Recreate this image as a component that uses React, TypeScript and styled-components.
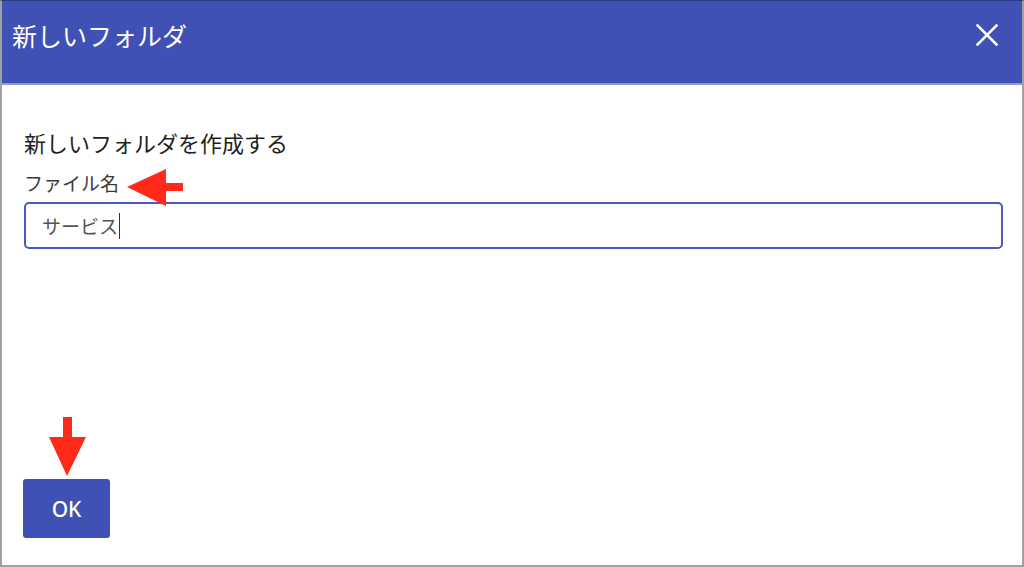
import React from 'react';
import styled, { createGlobalStyle } from 'styled-components';

const GlobalStyle = createGlobalStyle`
  html, body {
    margin: 0;
    padding: 0;
    background: #ffffff;
  }
  body {
    font-family: "Noto Sans CJK JP", "Noto Sans", sans-serif;
  }
`;

const Frame = styled.div`
  position: relative;
  box-sizing: border-box;
  width: 1024px;
  height: 567px;
  display: flex;
  flex-direction: column;
  border: 2px solid #a0a0a0;
  border-top: 1px solid #2e3a86;
  background: #ffffff;
  overflow: hidden;
`;

const Header = styled.div`
  height: 84px;
  flex: 0 0 auto;
  display: flex;
  align-items: flex-start;
  justify-content: space-between;
  padding: 16px 17px 0 10px;
  box-sizing: border-box;
  background: #3f51b5;
  border-bottom: 2px solid #8d99d8;
`;

const HeaderTitle = styled.h1`
  margin: 0;
  font-size: 25px;
  line-height: 36px;
  font-weight: 400;
  color: #ffffff;
`;

const CloseButton = styled.button`
  width: 36px;
  height: 36px;
  padding: 0;
  margin: 0;
  border: none;
  background: transparent;
  display: flex;
  align-items: center;
  justify-content: center;
  cursor: pointer;
`;

const Body = styled.div`
  flex: 1;
  display: flex;
  flex-direction: column;
  padding: 42px 19px 27px 22px;
`;

const Heading = styled.div`
  font-size: 22px;
  line-height: 30px;
  color: #1f1f1f;
`;

const Label = styled.label`
  margin-top: 13px;
  font-size: 19px;
  line-height: 26px;
  color: #3a3a3a;
`;

const Field = styled.div`
  margin-top: 6px;
  height: 47px;
  box-sizing: border-box;
  border: 2px solid #4a5bbd;
  border-radius: 5px;
  display: flex;
  align-items: center;
  padding-left: 16px;
  font-size: 19px;
  color: #555555;
`;

const Caret = styled.span`
  display: inline-block;
  width: 1px;
  height: 26px;
  margin-left: 1px;
  background: #333333;
`;

const Spacer = styled.div`
  flex: 1;
`;

const OkButton = styled.button`
  align-self: flex-start;
  width: 87px;
  height: 59px;
  margin-left: -1px;
  border: none;
  border-radius: 3px;
  background: #3f51b5;
  color: #ffffff;
  font-family: "Noto Sans", "Noto Sans CJK JP", sans-serif;
  font-size: 21px;
  font-weight: 500;
  cursor: pointer;
`;

const Arrow = styled.svg<{ $left: number; $top: number }>`
  position: absolute;
  left: ${(p) => p.$left}px;
  top: ${(p) => p.$top}px;
  pointer-events: none;
`;

const CloseIcon = () => (
  <svg width="22" height="22" viewBox="0 0 22 22">
    <path d="M1.5 1.5 L20.5 20.5 M20.5 1.5 L1.5 20.5" stroke="#ffffff" strokeWidth="2.6" strokeLinecap="square" />
  </svg>
);

const App: React.FC = () => {
  return (
    <>
      <GlobalStyle />
      <Frame>
        <Header>
          <HeaderTitle>新しいフォルダ</HeaderTitle>
          <CloseButton aria-label="閉じる">
            <CloseIcon />
          </CloseButton>
        </Header>
        <Body>
          <Heading>新しいフォルダを作成する</Heading>
          <Label>ファイル名</Label>
          <Field>
            サービス
            <Caret />
          </Field>
          <Spacer />
          <OkButton>OK</OkButton>
        </Body>

        <Arrow $left={125} $top={168} width="56" height="38" viewBox="0 0 56 38">
          <polygon points="0,18 39,0 39,14 56,14 56,22 39,22 39,37" fill="#ff2a1a" />
        </Arrow>
        <Arrow $left={45} $top={416} width="40" height="60" viewBox="0 0 40 60">
          <polygon points="16,0 25,0 25,20 39,20 20,59 2,20 16,20" fill="#ff2a1a" />
        </Arrow>
      </Frame>
    </>
  );
};

export default App;
